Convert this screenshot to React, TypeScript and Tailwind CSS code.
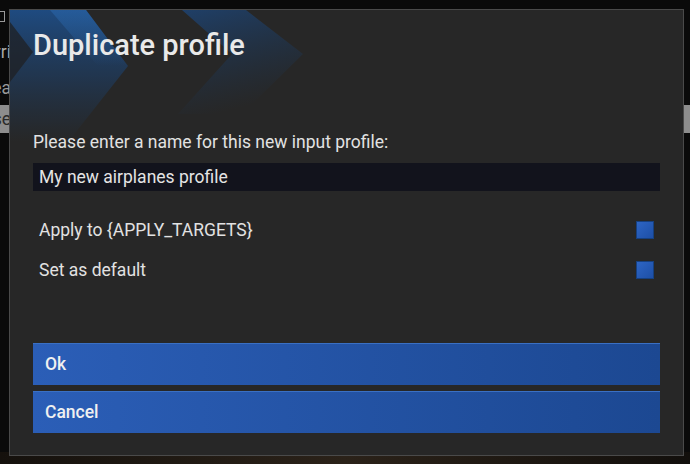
import { useState } from "react";

const Chevrons = () => (
  <svg
    className="pointer-events-none absolute left-0 top-0"
    width="320"
    height="150"
    viewBox="0 0 320 150"
  >
    <defs>
      <linearGradient id="fadeA" x1="0" y1="0" x2="0" y2="1">
        <stop offset="0" stopColor="#1d5190" stopOpacity="0.85" />
        <stop offset="0.5" stopColor="#1b4476" stopOpacity="0.5" />
        <stop offset="1" stopColor="#1b3d66" stopOpacity="0" />
      </linearGradient>
      <linearGradient id="fadeB" x1="0" y1="0" x2="0.3" y2="1">
        <stop offset="0" stopColor="#1c4a84" stopOpacity="0.7" />
        <stop offset="0.6" stopColor="#1a3f6c" stopOpacity="0.3" />
        <stop offset="1" stopColor="#1a3a60" stopOpacity="0" />
      </linearGradient>
      <linearGradient id="edge" x1="0" y1="0" x2="0" y2="1">
        <stop offset="0" stopColor="#2a66aa" stopOpacity="0.6" />
        <stop offset="1" stopColor="#2a66aa" stopOpacity="0" />
      </linearGradient>
    </defs>
    {/* left chevron */}
    <polygon points="0,0 76,0 118,56 58,132 0,132" fill="url(#fadeA)" />
    <polygon points="40,0 76,0 118,56 88,56" fill="url(#edge)" />
    <polygon points="0,12 23,42 0,72" fill="#1f2023" fillOpacity="0.75" />
    {/* right chevron */}
    <polygon points="172,0 236,0 293,44 232,104 168,104 222,44" fill="url(#fadeB)" />
  </svg>
);

const Checkbox = ({ on, toggle }: { on: boolean; toggle: () => void }) => (
  <button
    onClick={toggle}
    className="h-[18px] w-[18px] border border-[#16407f] bg-gradient-to-br from-[#2d65c4] to-[#1d4fa6]"
  >
    {on && <span className="block text-[12px] leading-none text-white">✓</span>}
  </button>
);

export default function App() {
  const [applyAll, setApplyAll] = useState(false);
  const [asDefault, setAsDefault] = useState(false);
  const [name, setName] = useState("My new airplanes profile");

  return (
    <div className="relative h-[464px] w-[690px] overflow-hidden bg-[#0a0a0a] font-['Roboto',sans-serif] text-[17.5px]">
      {/* app behind the modal */}
      <div className="flex h-full flex-col">
        <div className="flex h-[33px] items-center">
          <span className="ml-[-4px] h-[11px] w-[9px] border border-[#9a9a9a]" />
        </div>
        <div className="flex h-[38px] w-[11px] items-center justify-end overflow-hidden whitespace-nowrap text-[#a8a8a8]">
          Overri
        </div>
        <div className="flex h-[34px] w-[11px] items-center justify-end overflow-hidden whitespace-nowrap text-[#9a9a9a]">
          Crea
        </div>
        <div className="flex h-[28px] items-center bg-[#8d8d8d]">
          <div className="flex w-[11px] justify-end overflow-hidden whitespace-nowrap text-[#2a2a2a]">
            Rese
          </div>
        </div>
        <div className="flex-1" />
        <div className="h-[12px] bg-gradient-to-r from-[#15110d] via-[#2b2219] to-[#120f0c]" />
      </div>

      {/* modal */}
      <div className="absolute left-[9px] top-[9px] flex h-[447px] w-[675px] flex-col border border-[#4a4a4a] bg-[#272727] px-[23px] pb-[22px]">
        <Chevrons />
        <h1 className="relative mt-[17px] h-[36px] text-[29px] font-medium leading-[36px] text-[#e9e9e9]">
          Duplicate profile
        </h1>
        <p className="relative mt-[69px] leading-[20px] text-[#e2e2e2]">
          Please enter a name for this new input profile:
        </p>
        <input
          value={name}
          onChange={(e) => setName(e.target.value)}
          className="mt-[11px] h-[28px] bg-[#12131c] px-[6px] leading-[20px] text-[#e4e4e4] outline-none"
        />
        <div className="mt-[19px] flex h-[40px] items-center justify-between px-[6px] text-[#e2e2e2]">
          <span>Apply to {"{APPLY_TARGETS}"}</span>
          <Checkbox on={applyAll} toggle={() => setApplyAll(!applyAll)} />
        </div>
        <div className="flex h-[40px] items-center justify-between px-[6px] text-[#e2e2e2]">
          <span>Set as default</span>
          <Checkbox on={asDefault} toggle={() => setAsDefault(!asDefault)} />
        </div>
        <div className="flex-1" />
        <div className="flex flex-col gap-[6px]">
          <button className="h-[42px] border-t border-[#3a70c4] bg-gradient-to-r from-[#2b5eb7] to-[#1c4892] px-[12px] text-left font-medium text-[#f0f0f0]">
            Ok
          </button>
          <button className="h-[42px] border-t border-[#3a70c4] bg-gradient-to-r from-[#2b5eb7] to-[#1c4892] px-[12px] text-left font-medium text-[#f0f0f0]">
            Cancel
          </button>
        </div>
      </div>
    </div>
  );
}
